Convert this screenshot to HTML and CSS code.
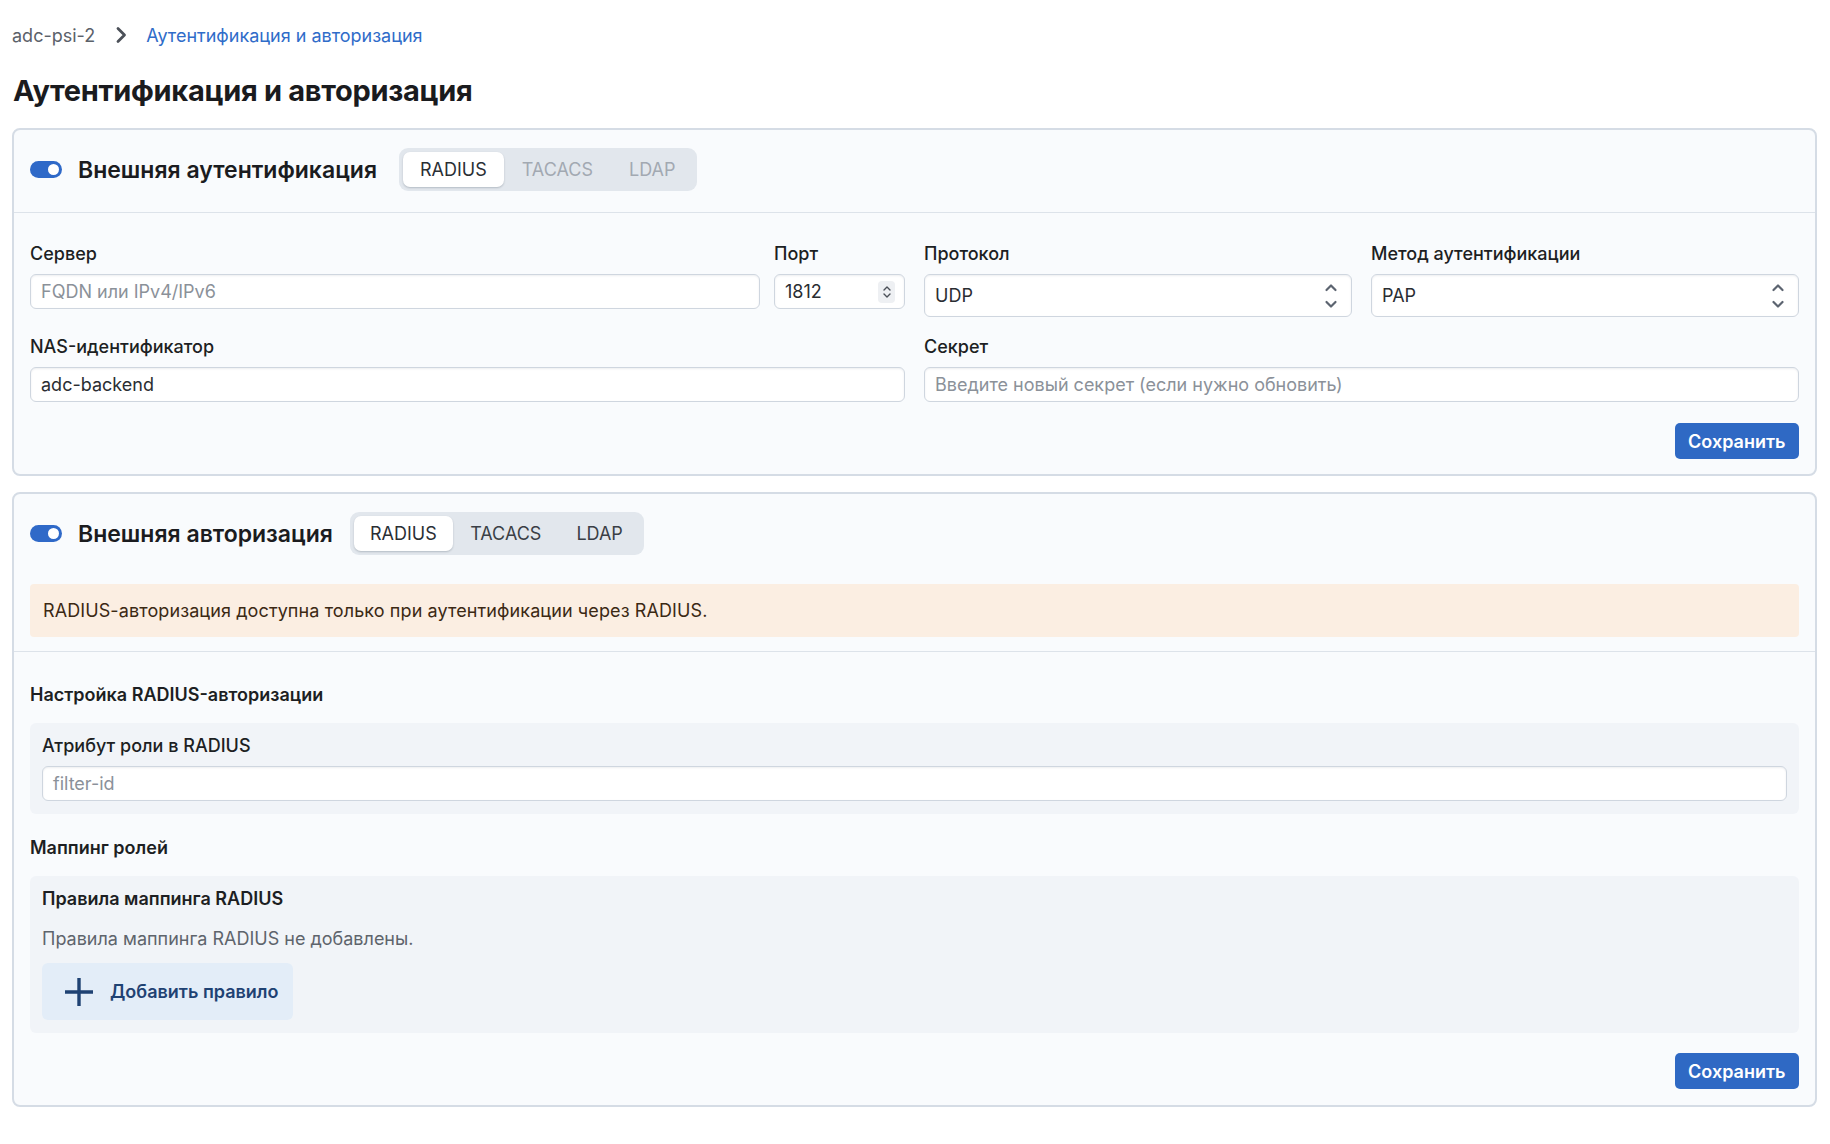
FILE: index.html
```html
<!DOCTYPE html>
<html lang="ru">
<head>
<meta charset="utf-8">
<title>Аутентификация и авторизация</title>
<link rel="stylesheet" href="styles.css">
</head>
<body>
<div class="page">
  <nav class="crumbs">
    <span class="crumb">adc-psi-2</span>
    <svg class="crumb-sep" width="12" height="18" viewBox="0 0 12 18"><path d="M3 2.5 L9.5 9 L3 15.5" fill="none" stroke="#4b5058" stroke-width="2.8" stroke-linecap="round" stroke-linejoin="round"/></svg>
    <span class="crumb-link">Аутентификация и авторизация</span>
  </nav>
  <h1 class="title">Аутентификация и авторизация</h1>

  <section class="card">
    <div class="card-head">
      <span class="toggle"><span class="knob"></span></span>
      <h2 class="card-title">Внешняя аутентификация</h2>
      <div class="seg seg-muted">
        <span class="seg-item active">RADIUS</span>
        <span class="seg-item">TACACS</span>
        <span class="seg-item">LDAP</span>
      </div>
    </div>
    <div class="card-body">
      <div class="grid2">
        <div class="sub-left">
          <label class="field">
            <span class="lbl">Сервер</span>
            <span class="input placeholder">FQDN или IPv4/IPv6</span>
          </label>
          <label class="field">
            <span class="lbl">Порт</span>
            <span class="input input-num">1812
              <span class="stepper"><svg width="10" height="18" viewBox="0 0 10 18"><path d="M2 7 L5 4 L8 7 M2 11 L5 14 L8 11" fill="none" stroke="#4b5058" stroke-width="1.4" stroke-linecap="round" stroke-linejoin="round"/></svg></span>
            </span>
          </label>
        </div>
        <div class="sub-right">
          <label class="field">
            <span class="lbl">Протокол</span>
            <span class="input select">UDP
              <svg class="chev" width="14" height="30" viewBox="0 0 14 30"><path d="M2.5 9 L7 4.5 L11.5 9 M2.5 21 L7 25.5 L11.5 21" fill="none" stroke="#5c6470" stroke-width="2.2" stroke-linecap="round" stroke-linejoin="round"/></svg>
            </span>
          </label>
          <label class="field">
            <span class="lbl">Метод аутентификации</span>
            <span class="input select">PAP
              <svg class="chev" width="14" height="30" viewBox="0 0 14 30"><path d="M2.5 9 L7 4.5 L11.5 9 M2.5 21 L7 25.5 L11.5 21" fill="none" stroke="#5c6470" stroke-width="2.2" stroke-linecap="round" stroke-linejoin="round"/></svg>
            </span>
          </label>
        </div>
        <label class="field">
          <span class="lbl">NAS-идентификатор</span>
          <span class="input">adc-backend</span>
        </label>
        <label class="field">
          <span class="lbl">Секрет</span>
          <span class="input placeholder">Введите новый секрет (если нужно обновить)</span>
        </label>
      </div>
      <div class="actions"><button class="btn-save">Сохранить</button></div>
    </div>
  </section>

  <section class="card card2">
    <div class="card-head head2">
      <div class="head-row">
        <span class="toggle"><span class="knob"></span></span>
        <h2 class="card-title">Внешняя авторизация</h2>
        <div class="seg seg2">
          <span class="seg-item active">RADIUS</span>
          <span class="seg-item">TACACS</span>
          <span class="seg-item">LDAP</span>
        </div>
      </div>
      <div class="alert">RADIUS-авторизация доступна только при аутентификации через RADIUS.</div>
    </div>
    <div class="card-body body2">
      <h3 class="sec-title">Настройка RADIUS-авторизации</h3>
      <div class="box box-attr">
        <span class="lbl lbl-box">Атрибут роли в RADIUS</span>
        <span class="input placeholder">filter-id</span>
      </div>
      <h3 class="sec-title sec-map">Маппинг ролей</h3>
      <div class="box box-map">
        <div class="box-title">Правила маппинга RADIUS</div>
        <div class="empty">Правила маппинга RADIUS не добавлены.</div>
        <button class="btn-add">
          <svg width="30" height="30" viewBox="0 0 30 30"><path d="M15 1 V29 M1 15 H29" stroke="#1f4273" stroke-width="3.4"/></svg>
          <span>Добавить правило</span>
        </button>
      </div>
      <div class="actions actions2"><button class="btn-save">Сохранить</button></div>
    </div>
  </section>
</div>
</body>
</html>
```

FILE: styles.css
```css
* { box-sizing: border-box; }
html, body { margin: 0; padding: 0; background: #ffffff; }
body {
  font-family: Inter, "Noto Sans", "Liberation Sans", sans-serif;
  color: #1c1e21;
}
.page { padding: 22px 13px 20px 12px; }

.crumbs { display: flex; align-items: center; height: 26px; font-size: 18px; }
.crumb { color: #5b616a; }
.crumb-sep { margin: 0 19px 0 20px; }
.crumb-link { color: #2f6cc9; }

.title {
  margin: 25px 0 19px 1px;
  font-size: 29px;
  font-weight: 700;
  letter-spacing: -0.3px;
  line-height: 36px;
  color: #1a1b1e;
}

.card {
  background: #f9fbfd;
  border: 2px solid #d5dce5;
  border-radius: 8px;
}
.card2 { margin-top: 16px; }

.card-head {
  display: flex;
  align-items: center;
  padding: 18px 16px 21px;
  border-bottom: 1.5px solid #dde3ea;
}
.head2 { flex-direction: column; align-items: stretch; padding-bottom: 14px; }
.head-row { display: flex; align-items: center; }

.toggle {
  width: 32px; height: 17px;
  border-radius: 9px;
  background: #2f69c8;
  display: flex; align-items: center; justify-content: flex-end;
  padding-right: 3px;
  flex: none;
}
.knob { width: 11px; height: 11px; border-radius: 50%; background: #fff; }

.card-title {
  margin: 0 0 0 16px;
  font-size: 23px;
  font-weight: 600;
  color: #1b1c1f;
}

.seg {
  margin-left: 22px;
  display: flex;
  align-items: center;
  background: #e2e7ed;
  border-radius: 9px;
  padding: 4px;
  height: 43px;
}
.seg2 { margin-left: 17px; }
.seg-item {
  font-size: 18px;
  color: #3a3f46;
  padding: 0 18px;
  height: 35px;
  display: flex; align-items: center;
  border-radius: 7px;
}
.seg-muted .seg-item { color: #a2a9b2; }
.seg .seg-item.active {
  background: #ffffff;
  color: #2a2e34;
  padding: 0 17px;
  box-shadow: 0 1px 2px rgba(20, 30, 50, 0.22);
}
.seg2 .seg-item.active { padding: 0 16px; }
.seg2 .seg-item { padding: 0 17.5px; }

.card-body { padding: 30px 16px 15px; }

.grid2 {
  display: grid;
  grid-template-columns: 1fr 1fr;
  column-gap: 19px;
  row-gap: 19px;
  align-items: start;
}
.sub-left { display: grid; grid-template-columns: 1fr 131px; column-gap: 14px; }
.sub-right { display: grid; grid-template-columns: 1fr 1fr; column-gap: 19px; }

.field { display: flex; flex-direction: column; }
.lbl {
  font-size: 18px;
  font-weight: 500;
  line-height: 22px;
  color: #1d1f23;
  margin-bottom: 9px;
}
.input {
  display: flex;
  align-items: center;
  height: 35px;
  padding: 0 10px;
  background: #ffffff;
  border: 1.5px solid #cfd6df;
  border-radius: 6px;
  box-shadow: inset 0 1px 2px rgba(30, 40, 60, 0.08);
  font-size: 18px;
  color: #2a2d32;
}
.placeholder { color: #8b9199; }
.input-num { justify-content: space-between; padding-right: 9px; }
.stepper {
  width: 17px; height: 22px;
  background: #eef0f3;
  border-radius: 4px;
  display: flex; align-items: center; justify-content: center;
}
.select { height: 43px; justify-content: space-between; padding-right: 13px; }
.chev { flex: none; }

.actions { display: flex; justify-content: flex-end; margin-top: 21px; }
.btn-save {
  font-family: inherit;
  font-size: 18px;
  font-weight: 600;
  color: #ffffff;
  background: #2f69c4;
  border: none;
  border-radius: 5px;
  height: 36px;
  padding: 0 13.5px;
}

.alert {
  margin-top: 29px;
  background: #fbeee2;
  border-radius: 4px;
  height: 53px;
  display: flex; align-items: center;
  padding: 0 13px;
  font-size: 18px;
  letter-spacing: 0.1px;
  color: #3b2914;
}

.body2 { padding-top: 32px; padding-bottom: 16px; }
.sec-title {
  margin: 0;
  font-size: 18px;
  font-weight: 600;
  line-height: 22px;
  color: #1d1f23;
}
.sec-map { margin-top: 23px; }
.box {
  margin-top: 17px;
  background: #f1f4f8;
  border-radius: 6px;
  padding: 12px 12px 13px;
}
.box-attr { display: flex; flex-direction: column; }
.lbl-box { margin-bottom: 9px; }
.box-title { font-size: 18px; font-weight: 600; line-height: 22px; color: #1d1f23; }
.empty { font-size: 18px; color: #5e646c; margin-top: 18px; line-height: 22px; }
.btn-add {
  margin-top: 13px;
  display: flex; align-items: center; gap: 16px;
  height: 57px;
  padding: 0 14px 0 22px;
  background: #e3edf8;
  border: none;
  border-radius: 6px;
  font-family: inherit;
  font-size: 18px;
  font-weight: 600;
  color: #1f4273;
}
.actions2 { margin-top: 20px; }
```
